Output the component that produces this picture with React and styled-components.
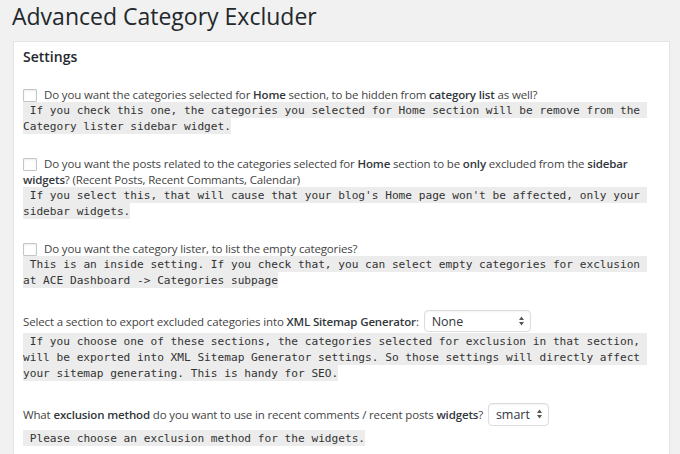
import styled, { createGlobalStyle } from 'styled-components';

const GlobalStyle = createGlobalStyle`
  html, body {
    margin: 0;
    padding: 0;
    background: #f1f1f1;
  }
  body {
    font-family: "Open Sans", "Liberation Sans", sans-serif;
    color: #444;
  }
`;

const Wrap = styled.div`
  padding: 0 10px 0 12px;
  height: 454px;
  overflow: hidden;
`;

const Title = styled.h1`
  margin: 0;
  font-size: 23px;
  font-weight: 400;
  line-height: 32px;
  color: #23282d;
`;

const Panel = styled.div`
  margin: 9px 0 0 1px;
  width: 657px;
  box-sizing: border-box;
  background: #fff;
  border: 1px solid #e5e5e5;
  box-shadow: 0 1px 1px rgba(0, 0, 0, 0.04);
  padding: 5px 14px 20px 9px;
`;

const Heading = styled.h2`
  margin: 0 0 20px;
  font-size: 14px;
  font-weight: 600;
  line-height: 20px;
  color: #23282d;
`;

const Option = styled.p`
  margin: 0 0 21px;
  font-size: 11.5px;
  line-height: 16px;
  letter-spacing: -0.15px;
`;

const Check = styled.input.attrs({ type: 'checkbox' })`
  appearance: none;
  display: inline-block;
  width: 14px;
  height: 13px;
  margin: 0 7px 0 0;
  vertical-align: -3px;
  border: 1px solid #c3c6c9;
  border-radius: 1px;
  background: #fff;
  box-shadow: inset 0 1px 2px rgba(0, 0, 0, 0.08);
  box-sizing: border-box;
`;

const Strong = styled.b`
  font-weight: 600;
  color: #32373c;
`;

const Note = styled.code`
  font-family: "DejaVu Sans Mono", "Liberation Mono", monospace;
  font-size: 11.15px;
  line-height: 12px;
  vertical-align: 1px;
  letter-spacing: 0;
  color: #333;
  background: rgba(0, 0, 0, 0.075);
  padding: 2px 0 1px;
  white-space: pre-wrap;
`;

const SelectBox = styled.span`
  position: relative;
  display: inline-block;
  vertical-align: baseline;
  margin: 0 0 ${(p) => p.$below}px 2px;
`;

const Select = styled.select`
  display: block;
  appearance: none;
  width: ${(p) => p.$w}px;
  height: ${(p) => p.$h}px;
  padding: 0 18px 0 7px;
  border: 1px solid #dcdcdc;
  border-radius: 4px;
  background: #fff;
  box-shadow: inset 0 1px 2px rgba(0, 0, 0, 0.05);
  font-family: "Open Sans", "Liberation Sans", sans-serif;
  font-size: 12.5px;
  color: #32373c;
`;

const Arrows = styled.svg`
  position: absolute;
  right: 7px;
  top: 6px;
  pointer-events: none;
`;

const Dropdown = ({ value, width, height = 22, below = 2 }) => (
  <SelectBox $below={below}>
    <Select $w={width} $h={height} defaultValue={value}>
      <option>{value}</option>
    </Select>
    <Arrows width="5" height="10" viewBox="0 0 5 10">
      <path d="M2.5 0.5 L5 4 H0 Z M0 6 H5 L2.5 9.5 Z" fill="#555" />
    </Arrows>
  </SelectBox>
);

export default function App() {
  return (
    <>
      <GlobalStyle />
      <Wrap>
        <Title>Advanced Category Excluder</Title>
        <Panel>
          <Heading>Settings</Heading>

          <Option>
            <Check />
            Do you want the categories selected for <Strong>Home</Strong> section, to be hidden from{' '}
            <Strong>category list</Strong> as well?
            <br />
            <Note> If you check this one, the categories you selected for Home section will be remove from the Category lister sidebar widget.</Note>
          </Option>

          <Option>
            <Check />
            Do you want the posts related to the categories selected for <Strong>Home</Strong> section to be{' '}
            <Strong>only</Strong> excluded from the <Strong>sidebar widgets</Strong>? (Recent Posts, Recent
            Commants, Calendar)
            <br />
            <Note> If you select this, that will cause that your blog's Home page won't be affected, only your sidebar widgets.</Note>
          </Option>

          <Option>
            <Check />
            Do you want the category lister, to list the empty categories?
            <br />
            <Note> This is an inside setting. If you check that, you can select empty categories for exclusion at ACE Dashboard -&gt; Categories subpage</Note>
          </Option>

          <Option>
            Select a section to export excluded categories into <Strong>XML Sitemap Generator</Strong>:{' '}
            <Dropdown value="None" width={107} />
            <br />
            <Note> If you choose one of these sections, the categories selected for exclusion in that section, will be exported into XML Sitemap Generator settings. So those settings will directly affect your sitemap generating. This is handy for SEO.</Note>
          </Option>

          <Option>
            What <Strong>exclusion method</Strong> do you want to use in recent comments / recent posts{' '}
            <Strong>widgets</Strong>? <Dropdown value="smart" width={61} height={23} below={5} />
            <br />
            <Note> Please choose an exclusion method for the widgets.</Note>
          </Option>
        </Panel>
      </Wrap>
    </>
  );
}
